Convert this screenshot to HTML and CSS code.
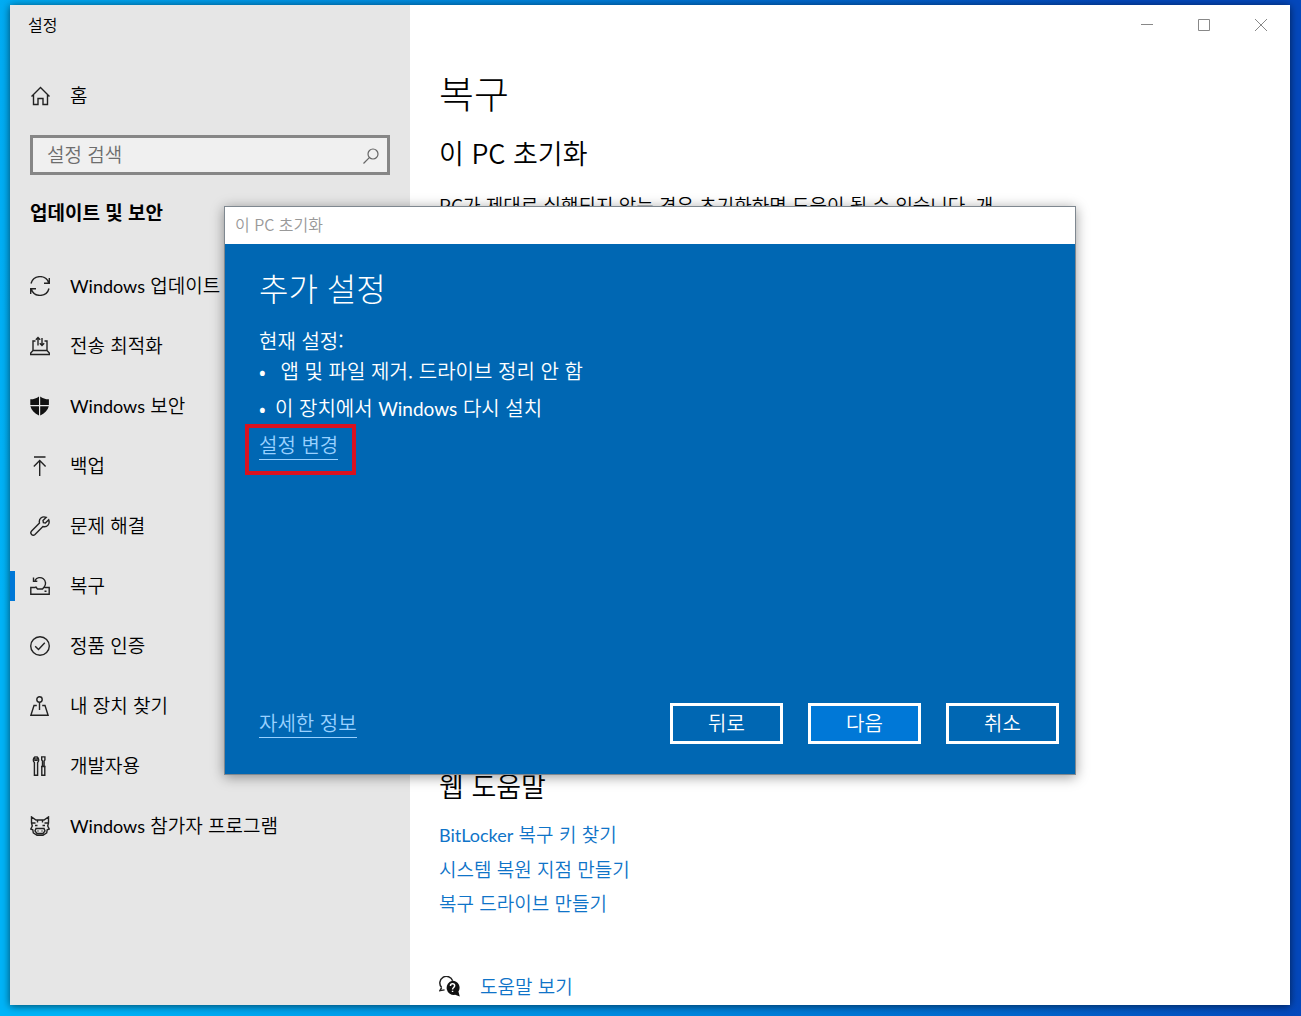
FILE: index.html
```html
<!DOCTYPE html>
<html lang="ko">

<head>
    <meta charset="UTF-8">
    <meta name="viewport" content="width=device-width, initial-scale=1.0">
    <title>설정</title>
    <link rel="stylesheet" href="styles.css">
</head>

<body>
    <div class="window">
        <aside class="sidebar">
            <div class="app-title">설정</div>

            <a href="#" class="nav-item home">
                <svg class="icon" viewBox="0 0 20 20"><path d="M1.500 10.500 10.500 1.500l9 9M3.500 9v9.500h4.500v-6h5v6h4.500V9"/></svg>
                <span>홈</span>
            </a>

            <div class="search">
                <input type="text" id="search" placeholder="설정 검색" aria-label="설정 검색">
                <svg class="search-icon" viewBox="0 0 18 18"><circle cx="11" cy="7" r="5"/><path d="M7.300 10.700 1.500 16.500"/></svg>
            </div>

            <h2 class="sidebar-heading">업데이트 및 보안</h2>

            <nav>
                <a href="#" class="nav-item">
                    <svg class="icon" viewBox="0 0 20 20"><path d="M1 7.500A9.300 9.300 0 0 1 18.800 7M19.300 2v5.300H14M19 12.500A9.300 9.300 0 0 1 1.200 13M.7 18v-5.300H6"/></svg>
                    <span><span class="latin">Windows</span> 업데이트</span>
                </a>
                <a href="#" class="nav-item">
                    <svg class="icon" viewBox="0 0 20 20"><path d="M5.500 5H3v9.500h14V5h-2.500M3 14.500.7 17v1.500h18.600V17L17 14.500M8 9.500V1.500M5.800 3.700 8 1.500l2.200 2.200M12 2v7.500M9.800 7.300 12 9.500l2.200-2.200"/></svg>
                    <span>전송 최적화</span>
                </a>
                <a href="#" class="nav-item">
                    <svg class="icon solid" viewBox="0 0 20 20"><path d="M9 .4V9H.3V3.300C4 3.200 6.500 2.200 9 .4zM10.200.4c2.500 1.800 5 2.800 8.700 2.900V9h-8.700zM.4 10.200H9v9.200C4.500 17.200 1.300 14.300.4 10.200zM10.200 10.200h8.600c-.9 4.100-4.100 7-8.600 9.200z"/></svg>
                    <span><span class="latin">Windows</span> 보안</span>
                </a>
                <a href="#" class="nav-item">
                    <svg class="icon" viewBox="0 0 20 20"><path d="M4 1h11.500M9.700 20V4.500M3.800 10.400l5.900-5.900 5.900 5.900"/></svg>
                    <span>백업</span>
                </a>
                <a href="#" class="nav-item">
                    <svg class="icon" viewBox="0 0 20 20"><path d="M16.300 1.300 13 4.600l.4 2 2 .4 3.300-3.300c1.600 4.300-1.500 7.800-5.800 6.800L5 18.400c-2.400 2.200-5.600-1-3.400-3.400L9.500 7.100C8.500 2.800 12-.3 16.300 1.300z"/></svg>
                    <span>문제 해결</span>
                </a>
                <a href="#" class="nav-item active">
                    <svg class="icon" viewBox="0 0 20 20"><path d="M5.500 11.500H.8v6.800h18.400v-6.800h-4.700M5 4.300A5.700 5.700 0 1 1 14 11.200L12.500 13h-5L5.500 10.500M3.500 1.500v3.700h3.800M14.500 15.200h2"/></svg>
                    <span>복구</span>
                </a>
                <a href="#" class="nav-item">
                    <svg class="icon" viewBox="0 0 20 20"><circle cx="10" cy="10" r="9.300"/><path d="m5.200 10.200 3.300 3.300 6.300-6.700"/></svg>
                    <span>정품 인증</span>
                </a>
                <a href="#" class="nav-item">
                    <svg class="icon" viewBox="0 0 20 20"><circle cx="9.500" cy="3.500" r="2.700"/><path d="M9.500 6.200V14M6.800 9.500H4L.9 19.200h17.200L15 9.500h-2.800"/></svg>
                    <span>내 장치 찾기</span>
                </a>
                <a href="#" class="nav-item">
                    <svg class="icon" viewBox="0 0 20 20"><path d="M5 .9v3.500h2V.9c2.300 1.400 2 4.500.6 5.600v12.700H4.400V6.500C3 5.400 2.700 2.300 5 .9zM11.700.9h3.200v3l-.8 1v5.400h-1.600V4.900l-.8-1zM11 10.500h4.600M11.800 10.500v8.700h3v-8.700"/></svg>
                    <span>개발자용</span>
                </a>
                <a href="#" class="nav-item">
                    <svg class="icon" viewBox="0 0 20 20"><path d="M1.500 7V.9L6 4h8l4.500-3.100V7l-.8 3 1.500 3-2 .8-.5 3-3.700 2.500H7l-3.700-2.500-.5-3-2-.8 1.500-3zM1.500 7h4M14.500 7h4M5 9.500h2.500M12.500 9.500H15M7.500 4v2.500M12.500 4v2.500M6 12.500h8l1 2.500-2 2.500H7L5 15zM8 14.500v1M12 14.500v1"/></svg>
                    <span><span class="latin">Windows</span> 참가자 프로그램</span>
                </a>
            </nav>
        </aside>

        <main class="content">
            <div class="window-controls">
                <button type="button" aria-label="최소화"><svg viewBox="0 0 14 14"><path d="M1 6.500h12"/></svg></button>
                <button type="button" aria-label="최대화"><svg viewBox="0 0 14 14"><path d="M1.500 1.500h11v11h-11z"/></svg></button>
                <button type="button" aria-label="닫기"><svg viewBox="0 0 14 14"><path d="m1 1 12 12M13 1 1 13"/></svg></button>
            </div>

            <h1>복구</h1>

            <section class="reset">
                <h2>이 PC 초기화</h2>
                <p>PC가 제대로 실행되지 않는 경우 초기화하면 도움이 될 수 있습니다. 개</p>
            </section>

            <section class="web-help">
                <h2>웹 도움말</h2>
                <ul>
                    <li><a href="#"><span class="latin">BitLocker</span> 복구 키 찾기</a></li>
                    <li><a href="#">시스템 복원 지점 만들기</a></li>
                    <li><a href="#">복구 드라이브 만들기</a></li>
                </ul>
            </section>

            <a href="#" class="get-help">
                <svg class="help-icon" viewBox="0 0 20 20">
                    <path class="bubble" d="M2.500 11A6.300 6.300 0 1 1 13 4.500M2.500 11 .8 14l4.500-.8"/>
                    <path class="bubble-solid" d="M12.800 4.500a6.700 6.700 0 0 1 5.700 10.300l1.300 4.700-4.400-1.600A6.700 6.700 0 1 1 12.800 4.500z"/>
                    <path class="mark" d="M10.900 9.500c0-2.800 4-2.600 4-.2 0 1.700-2 1.600-2 3.500M12.900 14v1.300"/>
                </svg>
                <span>도움말 보기</span>
            </a>
        </main>

        <div class="dialog" role="dialog" aria-labelledby="dialogTitle">
            <div class="dialog-title" id="dialogTitle">이 PC 초기화</div>
            <div class="dialog-body">
                <h2>추가 설정</h2>
                <p>현재 설정:</p>
                <ul>
                    <li><span>&nbsp;앱 및 파일 제거. 드라이브 정리 안 함</span></li>
                    <li><span>이 장치에서 <span class="latin">Windows</span> 다시 설치</span></li>
                </ul>
                <a href="#" class="dialog-link highlighted">설정 변경</a>

                <div class="dialog-footer">
                    <a href="#" class="dialog-link">자세한 정보</a>
                    <div class="buttons">
                        <button type="button">뒤로</button>
                        <button type="button" class="primary">다음</button>
                        <button type="button">취소</button>
                    </div>
                </div>
            </div>
        </div>
    </div>
</body>

</html>
```

FILE: styles.css
```css
* {
    box-sizing: border-box;
}

body {
    margin: 0;
    padding: 5px 11px 11px 10px;
    min-height: 100vh;
    font-family: "Noto Sans CJK KR", sans-serif;
    font-size: 19px;
    font-weight: 350;
    line-height: 28px;
    color: #000;
    background: linear-gradient(80deg, #00b4f8 5%, #0084dd 48%, #0448bc 88%);
}

h1, h2, p, ul {
    margin: 0;
    padding: 0;
}

ul {
    list-style: none;
}

a {
    color: #0f74c8;
    text-decoration: none;
}

svg {
    fill: none;
    stroke: #222;
    stroke-width: 1.4;
}

button {
    font-family: inherit;
    font-weight: inherit;
}

.latin {
    font-family: Lato, sans-serif;
    font-size: 18px;
    font-weight: normal;
}

.window {
    position: relative;
    display: flex;
    min-height: calc(100vh - 16px);
    background: #fff;
    box-shadow: 0 1px 8px rgba(0, 0, 0, 0.6);
}

/* 왼쪽 메뉴 */
.sidebar {
    flex: 0 0 400px;
    background: #e6e6e6;
}

.app-title {
    height: 40px;
    padding-left: 18px;
    font-size: 16px;
    line-height: 38px;
}

.nav-item {
    display: flex;
    align-items: center;
    gap: 20px;
    height: 60px;
    padding-left: 20px;
    color: #000;
}

.nav-item > span {
    padding-bottom: 2px;
}

.icon {
    width: 20px;
    height: 20px;
}

.icon.solid {
    fill: #111;
    stroke: none;
}

.home {
    margin-top: 21px;
}

.search {
    position: relative;
    margin: 9px 20px 0;
}

.search input {
    display: block;
    width: 100%;
    height: 40px;
    padding: 0 40px 4px 14px;
    border: 3px solid #868686;
    border-radius: 0;
    background: #f0f0f0;
    font-family: inherit;
    font-size: 19px;
    font-weight: inherit;
}

.search input::placeholder {
    color: #6d6d6d;
    opacity: 1;
}

.search-icon {
    position: absolute;
    top: 12px;
    right: 10px;
    width: 18px;
    height: 18px;
    stroke: #666;
    stroke-width: 1.2;
}

.sidebar-heading {
    margin: 23px 20px 30px;
    font-size: 19px;
    font-weight: bold;
}

.active {
    background: linear-gradient(#0078d7, #0078d7) left center / 5px 30px no-repeat;
}

/* 본문 */
.content {
    flex: 1;
    padding-left: 29px;
}

.window-controls {
    display: flex;
    justify-content: flex-end;
    height: 40px;
    padding-right: 1px;
}

.window-controls button {
    width: 57px;
    padding: 0;
    border: 0;
    background: none;
}

.window-controls svg {
    display: block;
    width: 14px;
    height: 14px;
    margin: auto;
    stroke: #888;
    stroke-width: 1;
}

.content h1 {
    margin-top: 23px;
    font-size: 38px;
    font-weight: 300;
    line-height: 48px;
}

.content h2 {
    font-size: 27px;
    font-weight: 350;
    line-height: 36px;
}

.reset {
    min-height: 616px;
    margin-top: 19px;
}

.reset p {
    margin-top: 20px;
}

.web-help {
    margin-top: 17px;
}

.web-help ul {
    margin-top: 13px;
    line-height: 34px;
}

.get-help {
    display: flex;
    align-items: center;
    gap: 20px;
    margin-top: 49px;
    line-height: 34px;
}

.help-icon {
    width: 21px;
    height: 21px;
}

.bubble-solid {
    fill: #111;
    stroke: none;
}

.mark {
    stroke: #fff;
}

/* 초기화 대화 상자 */
.dialog {
    position: absolute;
    top: 201px;
    left: 0;
    right: 0;
    display: flex;
    flex-direction: column;
    width: 852px;
    min-height: 569px;
    margin: 0 auto;
    border: 1px solid #7f8890;
    box-shadow: 0 2px 12px rgba(0, 0, 0, 0.4);
}

.dialog-title {
    height: 37px;
    padding-left: 10px;
    font-size: 16px;
    line-height: 34px;
    color: #999;
    background: #fff;
}

.dialog-body {
    flex: 1;
    display: flex;
    flex-direction: column;
    align-items: flex-start;
    padding: 18px 16px 30px 34px;
    font-size: 20px;
    line-height: 30px;
    color: #fff;
    background: #0067b3;
}

.dialog-body h2 {
    margin-bottom: 14px;
    font-size: 32px;
    font-weight: 300;
    line-height: 50px;
}

.dialog-body li {
    display: flex;
    margin-bottom: 7px;
}

.dialog-body li::before {
    content: "•";
    width: 16px;
}

.dialog-body .latin {
    font-size: 19px;
}

.dialog-link {
    position: relative;
    border-bottom: 1px solid #99d1ff;
    line-height: 28px;
    color: #99d1ff;
}

.highlighted::after {
    content: "";
    position: absolute;
    inset: -7px -18px -16px -14px;
    border: 4px solid #d9121f;
}

.dialog-footer {
    display: flex;
    justify-content: space-between;
    align-items: center;
    align-self: stretch;
    margin-top: auto;
}

.buttons {
    display: flex;
    gap: 25px;
}

.buttons button {
    width: 113px;
    height: 41px;
    padding: 0 0 2px;
    border: 3px solid #fff;
    font-size: 20px;
    line-height: 30px;
    color: #fff;
    background: #0067b3;
}

.buttons .primary {
    background: #0078d7;
}
```
